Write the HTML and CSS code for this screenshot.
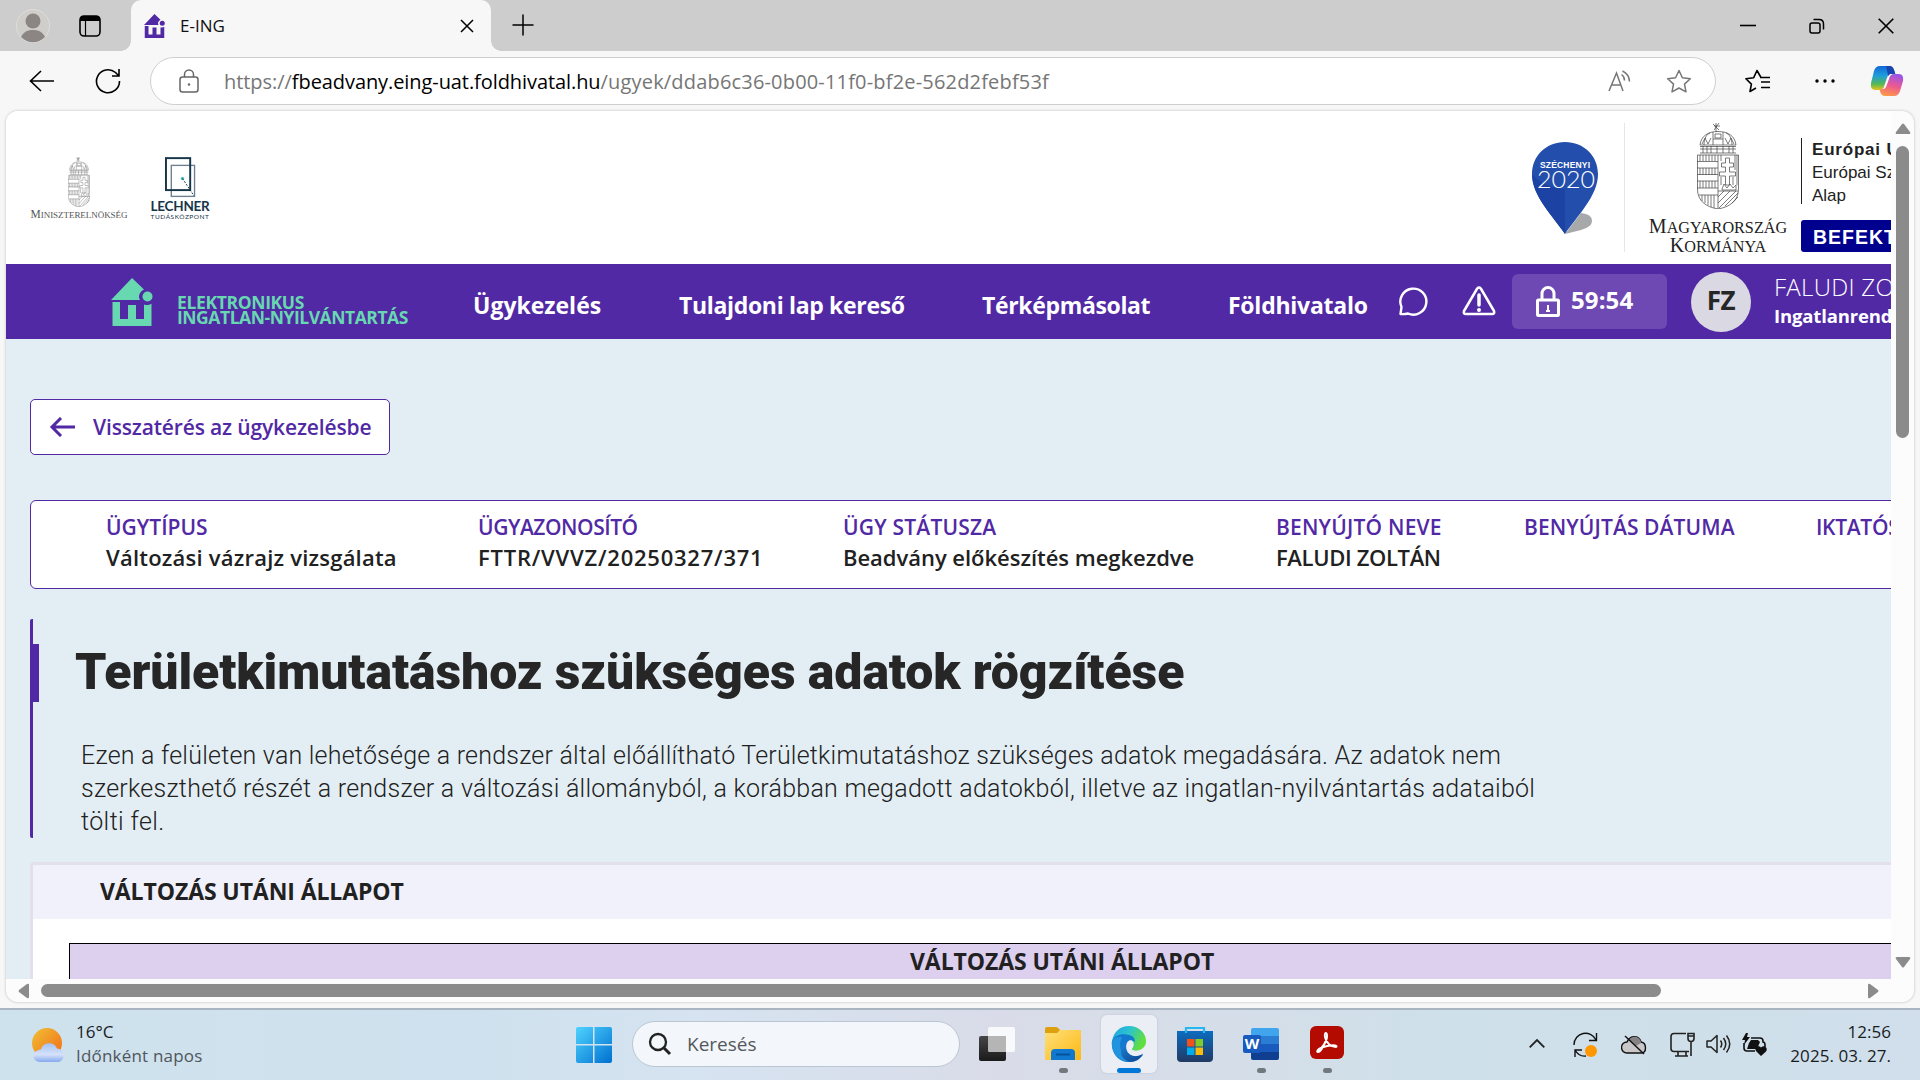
FILE: index.html
```html
<!DOCTYPE html>
<html lang="hu">
<head>
<meta charset="utf-8">
<title>E-ING</title>
<link rel="stylesheet" href="styles.css">
</head>
<body>
<svg class="defs" width="0" height="0" aria-hidden="true">
  <defs>
    <symbol id="crest" viewBox="0 0 42 86">
      <g fill="none" stroke="currentColor" stroke-width=".7">
        <path d="M16 1l6 6M22 0l-5 7M19 0v9M17 3h6"/>
        <path d="M3 22C4 13 11 8.500 21 8.500S38 13 39 22zM7 22c0-7 3-11 6-12M35 22c0-7-3-11-6-12M16 9v13M26 9v13M16 16h10M18 11h6v4h-6z"/>
        <path d="M5 21l3-6 3 6 3-6M37 21l-3-6-3 6-3-6"/>
        <path d="M3 23.500h36M3 26h36M3 30h36M6 23v7M10 23v7M14 23v7M20 23v7M26 23v7M32 23v7M36 23v7"/>
        <path d="M.5 32h41v34c0 12-9 18-20.500 20C9 84 .5 78 .5 66zM21 32v54"/>
        <path d="M0 38.500h21M0 45h21M0 51.500h21M0 58h21M0 65h21M2 72h19"/>
        <path d="M3 32v6M6 32v6M9 32v6M12 32v6M15 32v6M18 32v6M3 45v7M6 45v7M9 45v7M12 45v7M15 45v7M18 45v7M3 58v7M6 58v7M9 58v7M12 58v7M15 58v7M18 58v7M5 72v6M8 72v8M11 72v10M14 72v12M17 72v13"/>
        <path d="M28.500 35h4v5h4v4h-4v5h6v4h-6v9h-4v-9h-6v-4h6v-5h-4v-4h4zM24 32v6M38 32v15M40 32v30M24 54v8M36 54v8"/>
        <path d="M25 66l2-5 3 4 3-4 3 4 3-3v5H25zM21 68h20M21 74l6-6M21 80l12-12M22 85l17-17M28 83l13-13M35 80l6-6"/>
      </g>
    </symbol>
    <symbol id="house" viewBox="0 0 42 48">
      <path d="M21 0L33 11.500C28 14 27 19 29 22H0z"/>
      <circle cx="36.500" cy="18.500" r="5"/>
      <path d="M1.500 24H9v17h8V27h8v14h8V26.500c2 .8 5 .8 7.500-.8V48h-39z"/>
    </symbol>
    <linearGradient id="gWin" x1="0" y1="0" x2="1" y2="1"><stop offset="0" stop-color="#4fd3ff"/><stop offset="1" stop-color="#0070cf"/></linearGradient>
    <linearGradient id="gSun" x1="0" y1="0" x2="1" y2="1"><stop offset="0" stop-color="#f0c137"/><stop offset="1" stop-color="#f26a14"/></linearGradient>
    <linearGradient id="gCloud" x1="0" y1="0" x2="0" y2="1"><stop offset="0" stop-color="#a5c2f5"/><stop offset=".6" stop-color="#d5e1f8"/><stop offset="1" stop-color="#86a9ee"/></linearGradient>
    <linearGradient id="gFold" x1="0" y1="0" x2="1" y2="1"><stop offset="0" stop-color="#ffe07a"/><stop offset="1" stop-color="#fcb813"/></linearGradient>
    <linearGradient id="gEdge1" x1="0" y1="0" x2="1" y2=".4"><stop offset="0" stop-color="#1f9fe0"/><stop offset=".5" stop-color="#2bc3d2"/><stop offset="1" stop-color="#62df3e"/></linearGradient>
    <linearGradient id="gEdge2" x1="0" y1="0" x2="1" y2="1"><stop offset="0" stop-color="#1783d6"/><stop offset="1" stop-color="#123f87"/></linearGradient>
    <linearGradient id="gCop1" x1="0" y1="0" x2="0" y2="1"><stop offset="0" stop-color="#1268d8"/><stop offset=".4" stop-color="#1f9ddb"/><stop offset=".75" stop-color="#53b955"/><stop offset="1" stop-color="#e8c51a"/></linearGradient>
    <linearGradient id="gCop2" x1=".6" y1="0" x2=".3" y2="1"><stop offset="0" stop-color="#9a55e8"/><stop offset=".5" stop-color="#ec5990"/><stop offset="1" stop-color="#ff9a45"/></linearGradient>
    <linearGradient id="gStore" x1="0" y1="0" x2="0" y2="1"><stop offset="0" stop-color="#0c6cc0"/><stop offset="1" stop-color="#213a63"/></linearGradient>
    <linearGradient id="gTask" x1="0" y1="0" x2="0" y2="1"><stop offset="0" stop-color="#464646"/><stop offset="1" stop-color="#1a1a1a"/></linearGradient>
  </defs>
</svg>

<header class="tabstrip">
  <svg class="profile" width="34" height="42" viewBox="0 0 34 42"><circle cx="17" cy="21" r="16.500" fill="#cfcecb" stroke="#dedddb"/><circle cx="17" cy="16" r="7.500" fill="#8b8683"/><path d="M5 32c3-6 7-7 12-7s9 1 12 7c-7 7-17 7-24 0z" fill="#8b8683"/></svg>
  <svg class="workspaces" width="22" height="22" viewBox="0 0 22 22"><rect x="1" y="1" width="20" height="20" rx="4" fill="none" stroke="#000" stroke-width="1.600"/><path d="M1 6V4q0-3 3-3h14q3 0 3 3v2z"/><path d="M6.500 6v15" stroke="#000" stroke-width="1.200"/></svg>
  <div class="tab">
    <svg class="favicon" width="21" height="24" viewBox="0 0 42 48"><use href="#house" fill="#5229a5"/></svg>
    <span class="tab-title">E-ING</span>
    <svg width="14" height="14" viewBox="0 0 14 14" fill="none" stroke="#000" stroke-width="1.500"><path d="M1 1l12 12M13 1L1 13"/></svg>
  </div>
  <svg class="newtab" width="22" height="22" viewBox="0 0 22 22" fill="none" stroke="#000" stroke-width="1.500"><path d="M11 .5v21M.5 11h21"/></svg>
  <div class="window-controls">
    <svg width="16" height="16" viewBox="0 0 16 16"><path d="M0 7.500h16" stroke="#000" stroke-width="1.600"/></svg>
    <svg width="16" height="16" viewBox="0 0 16 16" fill="none" stroke="#000" stroke-width="1.500"><rect x="1" y="5" width="10" height="10" rx="2"/><path d="M4.500 1.500H10q4.500 0 4.500 4.500v5.500"/></svg>
    <svg width="16" height="16" viewBox="0 0 16 16" fill="none" stroke="#000" stroke-width="1.600"><path d="M.7.7l14.600 14.600M15.300.7L.7 15.300"/></svg>
  </div>
</header>

<div class="toolbar">
  <svg class="nav-back" width="26" height="22" viewBox="0 0 26 22" fill="none" stroke="#000" stroke-width="1.600"><path d="M25 11H1.500M12 1L1.500 11 12 21"/></svg>
  <svg class="nav-reload" width="26" height="26" viewBox="0 0 26 26" fill="none" stroke="#000" stroke-width="1.600"><path d="M24.500 13A11.500 11.500 0 1 1 20.500 4.500L24 8M24 1v7h-7"/></svg>
  <div class="address">
    <svg class="lock" width="20" height="24" viewBox="0 0 20 24" fill="none" stroke="#666" stroke-width="1.500"><rect x="1" y="8" width="18" height="15" rx="2.500"/><path d="M5.500 8V5.500a4.500 4.500 0 0 1 9 0V8"/><circle cx="10" cy="15.500" r="1.200" fill="#666" stroke="none"/></svg>
    <span class="url">https://<b>fbeadvany.eing-uat.foldhivatal.hu</b><span class="path">/ugyek/ddab6c36-0b00-11f0-bf2e-562d2febf53f</span></span>
    <svg class="read-aloud" width="24" height="22" viewBox="0 0 24 22" fill="none" stroke="#767676" stroke-width="1.500"><path d="M1 21L8.500 3 15 21M3.500 15h9M13.500 4.500q3 2 3 6M14.500 1q6.500 3 7 10.500"/></svg>
    <svg class="star" width="26" height="24" viewBox="0 0 26 24" fill="none" stroke="#767676" stroke-width="1.500" stroke-linejoin="round"><path d="M13 1.500l3.400 7.200 7.900 1-5.800 5.400 1.500 7.700-7-3.800-7 3.800 1.500-7.700L1.700 9.700l7.900-1z"/></svg>
  </div>
  <svg class="favorites" width="26" height="24" viewBox="0 0 26 24" fill="none" stroke="#000" stroke-width="1.600" stroke-linejoin="round"><path d="M16 8.500L12 1.500 8.700 8.700.9 9.700l5.500 5.400L5 22.500l6-3.500M15 8.500h10M16 13h9M16 18.500h9"/></svg>
  <svg class="more" width="20" height="4" viewBox="0 0 20 4"><circle cx="2" cy="2" r="1.700"/><circle cx="10" cy="2" r="1.700"/><circle cx="18" cy="2" r="1.700"/></svg>
  <svg class="copilot" width="34" height="32" viewBox="0 0 34 32"><path d="M10 1h9q4 0 5.500 6l.5 2h-3q-4 0-5 4l-3 9q-1 3-5 3H5q-5 0-4-7L4 6q1.500-5 6-5z" fill="url(#gCop1)"/><path d="M16 1h4q3 0 4.500 5l1 3.500h-3q-3 0-4 3z" fill="#1746b0"/><path d="M24 9h5q5 0 4 7l-3 10q-1.500 5-6 5h-9q-4 0-5-5l-.5-1.500q4 0 5-4l3-8.500q1-3 6.500-3z" fill="url(#gCop2)"/><path d="M20 9h4q-4 0-5 5l-3 8q-1 2-4 2.500 2-1 2.500-4l3-8.500z" fill="#fff"/></svg>
</div>

<main class="frame">
  <div class="viewport">
    <section class="logos">
      <div class="logo-office"><svg width="22" height="50" viewBox="0 0 42 86" preserveAspectRatio="none" color="#666"><use href="#crest" width="42" height="86"/></svg><span>M<small>INISZTERELNÖKSÉG</small></span></div>
      <div class="logo-lechner">
        <svg width="31" height="41" viewBox="0 0 32 42" fill="none"><rect x="6.500" y="8.500" width="24" height="32" stroke="#6e8090" stroke-width="1.400"/><rect x="1" y="1" width="25" height="33" stroke="#173548" stroke-width="2"/><circle cx="18" cy="22" r="1.800" fill="#52c3c4"/><path d="M18 22l12 18" stroke="#173548" stroke-dasharray="2 1.500"/></svg>
        <strong>LECHNER</strong><span>TUDÁSKÖZPONT</span>
      </div>
      <div class="logo-pin">
        <svg width="68" height="94" viewBox="0 0 68 94"><path d="M33 92l16-21q11 1 11 8 0 6-11 9z" fill="#a7a8aa"/><path d="M33 0c19 0 33 14 33 32 0 22-21 42-33 60C21 74 0 54 0 32 0 14 14 0 33 0z" fill="#234eac"/><path d="M33 47v45C21 74 0 54 0 32q12 14 33 15z" fill="#1c43a4"/><text x="8" y="25.500" textLength="50" class="pin-name">SZÉCHENYI</text><text x="5" y="46" textLength="58" lengthAdjust="spacingAndGlyphs" class="pin-year">2020</text></svg>
      </div>
      <div class="logo-gov"><svg width="42" height="86" viewBox="0 0 42 86" color="#444"><use href="#crest" width="42" height="86"/></svg><span class="gov-a">M<small>AGYARORSZÁG</small></span><span class="gov-b">K<small>ORMÁNYA</small></span></div>
      <div class="logo-eu"><div class="eu-text"><b>Európai Unió</b><span>Európai Szociális</span><span>Alap</span></div><div class="eu-badge">BEFEKTETÉS</div></div>
    </section>

    <nav class="mainnav">
      <svg class="brand-mark" width="42" height="48" viewBox="0 0 42 48"><use href="#house" fill="#68d8b1"/></svg>
      <div class="brand"><span class="brand-a">ELEKTRONIKUS</span><span class="brand-b">INGATLAN-NYILVÁNTARTÁS</span></div>
      <div class="links"><a class="l1">Ügykezelés</a><a class="l2">Tulajdoni lap kereső</a><a class="l3">Térképmásolat</a><a class="l4">Földhivatalo</a></div>
      <svg class="chat" width="30" height="30" viewBox="0 0 30 30" fill="none" stroke="#fff" stroke-width="2.400" stroke-linejoin="round"><path d="M2.500 28l1-7A13 13 0 1 1 10 27.500q-4 1-7.500.5z"/></svg>
      <svg class="warn" width="34" height="30" viewBox="0 0 34 30" fill="none" stroke="#fff" stroke-width="2.500" stroke-linejoin="round"><path d="M15.200 2.500q1.800-2 3.600 0L32 25q1 3-2 3H4q-3 0-2-3z"/><path d="M17 9v10" stroke-width="3.500" stroke-linecap="round"/><circle cx="17" cy="24" r="1" stroke-width="2"/></svg>
      <div class="timer"><svg width="24" height="32" viewBox="0 0 24 32" fill="none" stroke="#fff" stroke-width="3"><rect x="1.500" y="14" width="21" height="15.500" rx="1"/><path d="M6 14V7.500a6 6 0 0 1 12 0V14"/><path d="M12 19v6M10 25h4" stroke-width="2"/></svg><span>59:54</span></div>
      <div class="avatar">FZ</div>
      <div class="user"><span>FALUDI ZOLTÁN</span><b>Ingatlanrendező</b></div>
    </nav>

    <div class="content">
      <a class="back"><svg width="26" height="20" viewBox="0 0 26 20" fill="none" stroke="#5229a5" stroke-width="3"><path d="M26 10H3M12 1L3 10l9 9"/></svg><span>Visszatérés az ügykezelésbe</span></a>

      <dl class="case">
        <div class="c1"><dt>ÜGYTÍPUS</dt><dd>Változási vázrajz vizsgálata</dd></div>
        <div class="c2"><dt>ÜGYAZONOSÍTÓ</dt><dd>FTTR/VVVZ/20250327/371</dd></div>
        <div class="c3"><dt>ÜGY STÁTUSZA</dt><dd>Beadvány előkészítés megkezdve</dd></div>
        <div class="c4"><dt>BENYÚJTÓ NEVE</dt><dd>FALUDI ZOLTÁN</dd></div>
        <div class="c5"><dt>BENYÚJTÁS DÁTUMA</dt></div>
        <div class="c6"><dt>IKTATÓSZÁM</dt></div>
      </dl>

      <section class="intro">
        <div class="title-row"><h1>Területkimutatáshoz szükséges adatok rögzítése</h1></div>
        <p><span class="p1">Ezen a felületen van lehetősége a rendszer által előállítható Területkimutatáshoz szükséges adatok megadására. Az adatok nem</span><br><span class="p2">szerkeszthető részét a rendszer a változási állományból, a korábban megadott adatokból, illetve az ingatlan-nyilvántartás adataiból</span><br><span class="p3">tölti fel.</span></p>
      </section>

      <section class="panel">
        <h2><span>VÁLTOZÁS UTÁNI ÁLLAPOT</span></h2>
        <div class="table-head"><span>VÁLTOZÁS UTÁNI ÁLLAPOT</span></div>
      </section>
    </div>
  </div>
  <div class="vscroll"><svg width="16" height="12" viewBox="0 0 16 12"><path d="M7 1q1-1 2 0l6 8q1 2-1 2H2q-2 0-1-2z"/></svg><div class="vthumb"></div><svg class="down" width="16" height="12" viewBox="0 0 16 12"><path d="M7 11q1 1 2 0l6-8q1-2-1-2H2q-2 0-1 2z"/></svg></div>
  <div class="hscroll"><svg width="12" height="16" viewBox="0 0 12 16"><path d="M1 7q-1 1 0 2l8 6q2 1 2-1V2q0-2-2-1z"/></svg><div class="hthumb"></div><svg class="right" width="12" height="16" viewBox="0 0 12 16"><path d="M11 7q1 1 0 2l-8 6q-2 1-2-1V2q0-2 2-1z"/></svg></div>
</main>

<footer class="taskbar">
  <svg class="weather" width="34" height="36" viewBox="0 0 34 36"><circle cx="15" cy="15" r="15" fill="url(#gSun)"/><path d="M8 34a6 6 0 0 1-1-12q1-1 2-.5a8.500 8.500 0 0 1 16-1 7 7 0 0 1 2 13.500z" fill="url(#gCloud)"/></svg>
  <div class="weather-text"><span class="temp">16°C</span><span class="cond">Időnként napos</span></div>
  <svg class="start" width="36" height="36" viewBox="0 0 36 36" fill="url(#gWin)"><path d="M2 0h15v17H0V2q0-2 2-2zM18.500 0H34q2 0 2 2v15H18.500zM0 18.500h17V36H2q-2 0-2-2zM18.500 18.500H36V34q0 2-2 2H18.500z"/></svg>
  <div class="search"><svg width="24" height="24" viewBox="0 0 24 24" fill="none" stroke="#222" stroke-width="2.300"><circle cx="10" cy="10" r="8"/><path d="M16 16l6 6" stroke-width="3"/></svg><span>Keresés</span></div>
  <div class="apps">
    <div class="app"><svg width="36" height="36" viewBox="0 0 36 36"><rect y="10" width="27" height="25" rx="2" fill="url(#gTask)"/><rect x="9" y="1" width="27" height="25" rx="2" fill="#fff" opacity=".82"/><path d="M9 10h18v16H11q-2 0-2-2z" fill="#b5b5b5"/></svg></div>
    <div class="app"><svg width="36" height="36" viewBox="0 0 36 36"><path d="M0 3q0-2 2-2h9q2 0 4 3h19q2 0 2 2v7H0z" fill="#dfa00f"/><path d="M0 7h12l3-3h19q2 0 2 2v27q0 1-1 1H1q-1 0-1-1z" fill="url(#gFold)"/><path d="M6 34v-7q0-4 4-4h16q4 0 4 4v7z" fill="#1078cf"/><path d="M11 28.500h14" stroke="#07539b" stroke-width="2"/></svg><i class="dot"></i></div>
    <div class="app active"><svg width="36" height="36" viewBox="0 0 38 38"><path d="M1 17C2 6 10 0 19 0c11 0 18 8 18 16 0 6-5 10-11 10-3 0-5-1-3-3 3-5-1-10-7-10C9 13 2 16 1 22z" fill="url(#gEdge1)"/><path d="M1 16c3-6 9-8 15-7 6 0 10 4 9 8-4-4-9-2-9 5 0 8 8 13 18 8-4 6-9 8-15 8C8 38 0 29 1 16z" fill="#1378cf"/><path d="M12 12c-6 10 0 22 12 25-14 4-24-8-23-20 2-5 6-6 11-5z" fill="#2193df"/><path d="M16 19c-3 10 8 17 18 10-3 5-8 9-14 9-10-3-13-13-4-19z" fill="url(#gEdge2)"/></svg><i class="bar"></i></div>
    <div class="app"><svg width="36" height="38" viewBox="0 0 36 38"><path d="M9 7V2h18v5" fill="none" stroke="#27b7f0" stroke-width="2.200"/><path d="M0 5h36v27q0 4-4 4H4q-4 0-4-4z" fill="url(#gStore)"/><path d="M9 7V4M27 7V4" stroke="#27b7f0" stroke-width="2.200"/><path d="M10 13h7.500v7.500H10z" fill="#f1511b"/><path d="M18.500 13H26v7.500h-7.500z" fill="#80cc28"/><path d="M10 21.500h7.500V29H10z" fill="#00adef"/><path d="M18.500 21.500H26V29h-7.500z" fill="#fbbc09"/></svg></div>
    <div class="app"><svg width="36" height="36" viewBox="0 0 36 36"><path d="M8 4q0-2 2-2h24q2 0 2 2v6H8z" fill="#41a5ee"/><path d="M8 10h28v8H8z" fill="#2b7cd3"/><path d="M8 18h28v8H8z" fill="#185abd"/><path d="M8 26h28v6q0 2-2 2H10q-2 0-2-2z" fill="#103f91"/><rect y="9" width="18" height="18" rx="2" fill="#185abd"/><text x="9" y="23" text-anchor="middle" class="word">W</text></svg><i class="dot"></i></div>
    <div class="app"><svg width="34" height="36" viewBox="0 0 34 36"><rect width="34" height="33" rx="6" fill="#b30b00"/><path d="M8 25c5-4 8-9 9-14 .5-6-3-5-2 0 1 6 6 10 11 10 3-2-6-3-15 1-3 1-5 4-3 4 3 0 7-8 9-14" fill="none" stroke="#fff" stroke-width="1.900"/></svg><i class="dot"></i></div>
  </div>
  <div class="tray">
    <svg class="t1" width="16" height="9" viewBox="0 0 16 9" fill="none" stroke="#222" stroke-width="1.800"><path d="M.7 8.300L8 1l7.300 7.300"/></svg>
    <svg class="t2" width="26" height="26" viewBox="0 0 26 26" fill="none" stroke="#111" stroke-width="1.400"><path d="M1 13C1 0 18-3 23 8M23.500 1v7.500H16M2 25v-7h7M2 18q4 7 11 6"/><circle cx="18" cy="19" r="6" fill="#ff9800" stroke="none"/></svg>
    <svg class="t3" width="26" height="20" viewBox="0 0 26 20" fill="none" stroke="#111" stroke-width="1.400"><path d="M6 18a5 5 0 0 1 0-11C9 0 18 0 20 7c6 1 6 11 0 11z" fill="#c9c7c7"/><path d="M8 5c4-6 12-3 12 3l-5 3z" fill="#858383" stroke="none"/><path d="M4 1l19 18"/></svg>
    <svg class="t4" width="25" height="25" viewBox="0 0 25 25" fill="none" stroke="#222" stroke-width="1.600"><path d="M16 1.500H4q-3 0-3 3v12q0 3 3 3h15M8 19.500V24M16 19.500V24M5 24h13M18 1.500h6v5q0 3-3 3t-3-3zM21 9v15M18 4h6"/></svg>
    <svg class="t5" width="25" height="20" viewBox="0 0 25 20" fill="none" stroke="#222" stroke-width="1.500" stroke-linejoin="round"><path d="M1 7h4l6-5.500v17L5 13H1zM14.500 6.500q2.500 3.500 0 7M17.500 4q4.500 6 0 12M20.500 1.500q6.500 8.500 0 17"/></svg>
    <svg class="t6" width="25" height="23" viewBox="0 0 25 23"><path d="M9 5h9q3 0 3 3v1q2 0 2 3v2M2 10v5q0 3 3 3h8" fill="none" stroke="#111" stroke-width="1.600"/><path d="M9 7h7l2 2-3 7H5l2-6zM4 0L0 7h3l-1 5 6-8H5l1-4zM19 23l-5-5q-2-4 1.500-5 2-.5 3.500 1.500 2-2 4-1 3 2 1 5z" fill="#111"/></svg>
    <div class="clock"><span class="time">12:56</span><span class="date">2025. 03. 27.</span></div>
  </div>
</footer>
</body>
</html>
```
FILE: styles.css
```css
* { box-sizing: border-box; }
html, body { margin: 0; height: 100%; }
body {
  width: 1920px; height: 1080px; overflow: hidden;
  display: grid; grid-template-rows: 51px 60px 897px 72px;
  background: #f7f7f7; color: #212121;
  font-family: "Open Sans", "Noto Sans", sans-serif;
}
svg { display: block; flex: none; }
.defs { position: absolute; }
span, b, strong, a { white-space: nowrap; }

/* Browser tab strip */
.tabstrip { display: flex; align-items: center; background: #cdcdcd; padding-left: 16px; }
.workspaces { margin-left: 29px; }
.tab { position: relative; display: flex; align-items: center; align-self: stretch; width: 360px; margin-left: 30px; padding: 0 17px 0 13px; background: #f7f7f7; border-radius: 10px 10px 0 0; }
.tab::before, .tab::after { content: ""; position: absolute; bottom: 0; width: 10px; height: 10px; }
.tab::before { left: -10px; background: radial-gradient(circle at 0 0, transparent 9.500px, #f7f7f7 10px); }
.tab::after { right: -10px; background: radial-gradient(circle at 100% 0, transparent 9.500px, #f7f7f7 10px); }
.tab-title { margin-left: 15px; flex: 1; font-size: 17px; color: #111; }
.newtab { margin-left: 21px; margin-bottom: 1px; }
.window-controls { display: flex; gap: 53px; margin-left: auto; margin-right: 26px; }

/* Browser toolbar */
.toolbar { display: flex; align-items: center; padding: 0 0 0 29px; }
.nav-reload { margin-left: 40px; }
.address { display: flex; align-items: center; width: 1566px; height: 48px; margin-left: 29px; padding: 0 23px 0 28px; background: #fff; border: 1.500px solid #cfcfcf; border-radius: 24px; }
.url { margin-left: 25px; flex: 1; font: 20px "Open Sans", sans-serif; letter-spacing: -.05px; color: #767676; }
.url b { font-weight: 400; color: #000; letter-spacing: -.08px; }
.path { letter-spacing: .18px; }
.star { margin-left: 34px; }
.favorites { margin-left: 29px; }
.more { margin-left: 44px; }
.copilot { margin-left: 35px; }

/* Page frame with its scrollbars */
.frame { display: grid; grid-template: 868px 23px / 1885px 23px; width: 1908px; height: 891px; margin-left: 6px; background: #fcfcfc; border-radius: 12px; overflow: hidden; box-shadow: 0 0 3px #bbb; }
.viewport { overflow: hidden; background: #e3eef4; }
.vscroll { display: flex; flex-direction: column; align-items: center; padding-top: 12px; fill: #8b8b8b; }
.vthumb { width: 13px; height: 292px; margin-top: 11px; border-radius: 7px; background: #8b8b8b; }
.down { margin-top: auto; margin-bottom: 11px; }
.hscroll { display: flex; align-items: center; padding-left: 12px; fill: #8b8b8b; }
.hthumb { width: 1620px; height: 13px; margin-left: 11px; border-radius: 7px; background: #8b8b8b; flex: none; }
.right { margin-left: 206px; }

/* Partner logos */
.logos { display: flex; width: 2100px; height: 153px; background: #fff; }
.logo-office { display: flex; flex-direction: column; align-items: center; width: 98px; margin-left: 24px; padding-top: 46px; color: #555; font: 11.500px/13px "Liberation Serif", serif; }
.logo-office span { margin-top: 1px; }
.logo-office small { font-size: 9px; letter-spacing: -.05px; }
.logo-lechner { display: flex; flex-direction: column; align-items: center; width: 60px; margin-left: 22px; padding-top: 46px; color: #173548; }
.logo-lechner strong { font: 700 13.500px/14px Lato, sans-serif; letter-spacing: -.25px; margin-top: 1px; }
.logo-lechner span { font: 6.500px/7px Lato, sans-serif; letter-spacing: .55px; }
.logo-pin { width: 93px; height: 129px; margin: 12px 0 0 1322px; padding-top: 19px; border-right: 1px solid #e6e6e6; }
.pin-name { font: 700 8.500px "Liberation Sans", sans-serif; fill: #fff; }
.pin-year { font: 300 22.500px Lato, sans-serif; fill: #fff; }
.logo-gov { display: flex; flex-direction: column; align-items: center; width: 140px; margin-left: 23px; padding-top: 12px; color: #222; font: 20px/17px "Liberation Serif", serif; }
.logo-gov small { font-size: 16.200px; }
.gov-a { margin-top: 9px; }
.logo-eu { display: flex; flex-direction: column; width: 300px; margin-left: 13px; padding-top: 27px; color: #222; }
.eu-text { display: flex; flex-direction: column; height: 66px; padding-left: 10px; border-left: 1.500px solid #222; font: 17px/23px "Liberation Sans", sans-serif; }
.eu-text b { letter-spacing: .8px; }
.eu-badge { margin-top: 16px; height: 32px; padding-left: 12px; border-radius: 3px; background: #00008f; color: #fff; font: 700 19.500px/34px "Liberation Sans", sans-serif; letter-spacing: 1px; }

/* Main navigation */
.mainnav { display: flex; width: 2100px; height: 75px; background: #5229a5; color: #fff; }
.brand-mark { margin: 14px 0 0 105px; }
.brand { display: flex; flex-direction: column; width: 296px; margin: 31px 0 0 24px; color: #68d8b1; font: 700 17.500px/15px "Open Sans", sans-serif; }
.brand-a { letter-spacing: -.35px; }
.brand-b { letter-spacing: -.45px; }
.links { display: grid; grid-template-columns: 206px 303px 246px 170px; padding-top: 24px; font: 700 23px/34px "Open Sans", sans-serif; }
.l2 { letter-spacing: -.33px; }
.l3 { letter-spacing: -.35px; }
.l4 { letter-spacing: -.25px; }
.chat { margin-top: 22px; }
.warn { margin: 22px 0 0 34px; }
.timer { display: flex; width: 155px; height: 55px; margin: 10px 0 0 16px; padding: 12px 0 0 24px; border-radius: 6px; background: #6e49b3; font: 700 24px/28px "Open Sans", sans-serif; letter-spacing: .1px; }
.timer span { margin-left: 11px; }
.avatar { width: 60px; height: 60px; margin: 8px 0 0 24px; border-radius: 50%; background: #dad8e2; color: #262626; text-align: center; font: 700 26px/57px "Open Sans", sans-serif; letter-spacing: -.4px; }
.user { display: flex; flex-direction: column; margin: 8px 0 0 23px; font: 300 24px/30px "Open Sans", sans-serif; letter-spacing: .3px; }
.user b { font: 700 18.500px/28px "Open Sans", sans-serif; letter-spacing: -.15px; }

/* Page content */
.content { width: 2100px; padding: 60px 0 0 24px; }
.back { display: flex; align-items: center; width: 360px; height: 56px; padding-left: 18px; border: 1px solid #5229a5; border-radius: 5px; background: #fff; color: #5229a5; font: 600 21px/54px "Open Sans", sans-serif; letter-spacing: -.15px; }
.back span { margin-left: 18px; }
.case { display: grid; grid-template-columns: 372px 365px 433px 248px 292px 200px; width: 2060px; height: 89px; margin: 45px 0 0; padding: 11px 0 0 75px; border: 1px solid #5229a5; border-radius: 6px; background: #fff; }
.case dt { color: #5229a5; font: 600 21px/31px "Open Sans", sans-serif; white-space: nowrap; }
.case dd { margin: 0; font: 600 22px/29px "Open Sans", sans-serif; white-space: nowrap; }
.c1 dd { letter-spacing: .22px; }
.c2 dt { letter-spacing: -.45px; }
.c2 dd { letter-spacing: .77px; }
.c3 dd { letter-spacing: -.03px; }
.c3 dt, .c4 dt { letter-spacing: .2px; }
.c4 dd { letter-spacing: -.35px; }
.c5 dt { letter-spacing: .1px; }
.c6 dt { letter-spacing: -.3px; }
.intro { height: 219px; margin-top: 30px; padding-top: 25px; border-left: 3px solid #5229a5; border-radius: 2px; }
.title-row { height: 58px; border-left: 6px solid #5229a5; border-radius: 0 3px 3px 0; padding-left: 36px; }
h1 { margin: 0; font: 900 50px/56px Roboto, sans-serif; letter-spacing: -.09px; color: #262626; white-space: nowrap; }
.intro p { margin: 37px 0 0 48px; font: 300 25px/33px Roboto, sans-serif; letter-spacing: .22px; }
.p2 { letter-spacing: .26px; }
.p3 { letter-spacing: .4px; }
.panel { height: 300px; margin-top: 24px; border: 3px solid #e4dfec; border-right: 0; border-radius: 4px 0 0 0; background: #fff; }
.panel h2 { margin: 0; height: 54px; padding-left: 67px; background: #f1f1fb; font: 700 23px/52px "Open Sans", sans-serif; letter-spacing: -.1px; }
.table-head { height: 80px; margin: 24px 0 0 36px; padding-left: 840px; border: 1px solid #000; background: #ddcfee; font: 700 23px/34px "Open Sans", sans-serif; letter-spacing: -.08px; }

/* Taskbar */
.taskbar { display: flex; border-top: 2px solid #a9b6c2; background: linear-gradient(90deg, #cee2ed 0%, #cfe1ee 25%, #d6e3f1 36%, #d9dce8 52%, #d4dee8 66%, #cee0ea 75%, #d0dfeb 100%); }
.weather { margin: 18px 0 0 32px; }
.weather-text { display: flex; flex-direction: column; width: 165px; margin: 10px 0 0 10px; font-size: 17px; line-height: 24px; color: #191c1f; }
.cond { color: #50565c; letter-spacing: .2px; }
.start { margin: 17px 0 0 335px; }
.search { display: flex; align-items: center; width: 328px; height: 46px; margin: 11px 0 0 20px; padding-left: 15px; border: 1.500px solid #bac6d1; border-radius: 23px; background: #f3f6fa; font-size: 19px; color: #54585c; }
.search span { margin-left: 15px; }
.apps { display: flex; margin: 5px 0 0 9px; gap: 10px; }
.app { display: flex; flex-direction: column; align-items: center; justify-content: space-between; width: 56px; height: 58px; padding: 11px 0 0; border-radius: 6px; }
.app.active { background: #ebeef4; box-shadow: 0 0 1px 1px #cdd3dc; }
.dot { width: 9px; height: 5px; border-radius: 3px; background: #71797f; }
.bar { width: 24px; height: 5px; border-radius: 3px; background: #0078d7; }
.word { font: 700 15px "Open Sans", sans-serif; fill: #fff; }
.tray { display: flex; margin-left: auto; padding-right: 29px; }
.t1 { margin-top: 29px; }
.t2 { margin: 22px 0 0 28px; }
.t3 { margin: 25px 0 0 22px; }
.t4 { margin: 22px 0 0 23px; }
.t5 { margin: 24px 0 0 11px; }
.t6 { margin: 23px 0 0 11px; }
.clock { display: flex; flex-direction: column; align-items: flex-end; width: 124px; padding-top: 10px; font-size: 17px; line-height: 24px; color: #191c1f; letter-spacing: .05px; }
```
